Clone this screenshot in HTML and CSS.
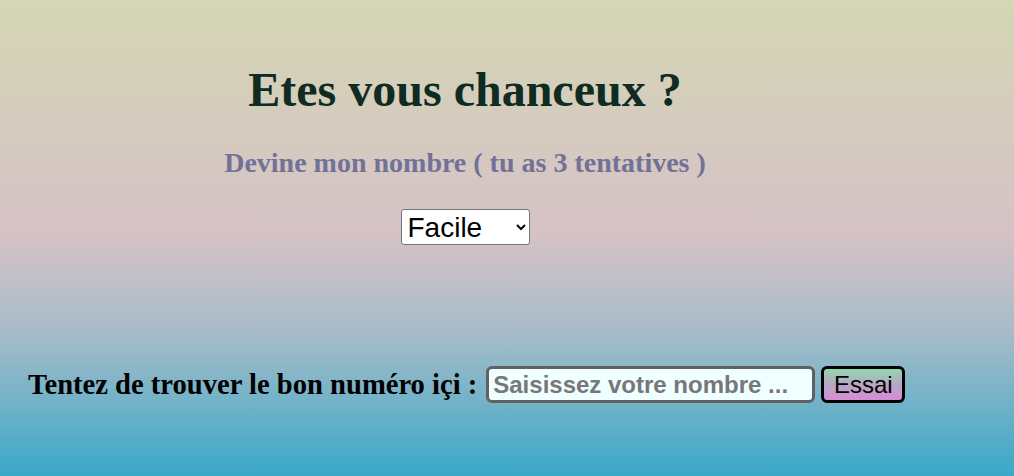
FILE: index.html
```html
<!DOCTYPE html>
<html lang="fr">
<head>
<meta charset="utf-8">
<title>Etes vous chanceux ?</title>
<link rel="stylesheet" href="styles.css">
</head>
<body>
<main class="page">
  <header class="intro">
    <h1 class="title">Etes vous chanceux ?</h1>
    <h2 class="subtitle">Devine mon nombre ( tu as 3 tentatives )</h2>
    <select class="level">
      <option>Facile</option>
      <option>Moyen</option>
      <option>Difficile</option>
    </select>
  </header>
  <form class="guess">
    <label class="guess-label" for="nombre">Tentez de trouver le bon numéro içi :</label>
    <input class="guess-input" id="nombre" type="text" placeholder="Saisissez votre nombre ...">
    <button class="guess-btn" type="button">Essai</button>
  </form>
</main>
</body>
</html>
```

FILE: styles.css
```css
html, body {
  height: 100%;
}
body {
  margin: 0;
  font-family: "Liberation Serif", "Times New Roman", serif;
  background: linear-gradient(to bottom, #d4d6b4 0%, #d6c2c6 49%, #a6bcc8 70%, #3aa8c8 100%);
  min-height: 476px;
}
.page {
  padding-top: 62px;
}
.intro {
  width: 930px;
  display: flex;
  flex-direction: column;
  align-items: center;
}
.title {
  margin: 0;
  font-size: 48px;
  font-weight: bold;
  line-height: 55px;
  color: #0f2b22;
}
.subtitle {
  margin: 30px 0 0;
  font-size: 28px;
  font-weight: bold;
  line-height: 32px;
  color: #727299;
}
.level {
  margin-top: 30px;
  width: 129px;
  height: 36px;
  font-family: "Liberation Sans", Arial, sans-serif;
  font-size: 28px;
  padding: 0 2px;
  background: #fff;
  color: #000;
  border: 1px solid #767676;
  border-radius: 3px;
}
.guess {
  margin-top: 121px;
  padding-left: 28px;
  display: flex;
  align-items: center;
}
.guess-label {
  font-size: 28.6px;
  font-weight: bold;
  color: #000;
  margin-right: 9px;
}
.guess-input {
  box-sizing: border-box;
  width: 329px;
  height: 37px;
  border: 3px solid #5f6162;
  border-radius: 6px;
  background: #f0ffff;
  font-family: "Liberation Sans", Arial, sans-serif;
  font-size: 24px;
  font-weight: bold;
  padding: 0 4px;
  color: #333;
}
.guess-input::placeholder {
  color: #777;
  opacity: 1;
}
.guess-btn {
  box-sizing: border-box;
  margin-left: 6px;
  width: 84px;
  height: 37px;
  border: 3px solid #000;
  border-radius: 6px;
  background: linear-gradient(to bottom, #8fd8ae, #b6a8c4 50%, #d88cd6);
  font-family: "Liberation Sans", Arial, sans-serif;
  font-size: 24px;
  color: #000;
  padding: 0;
}
```
